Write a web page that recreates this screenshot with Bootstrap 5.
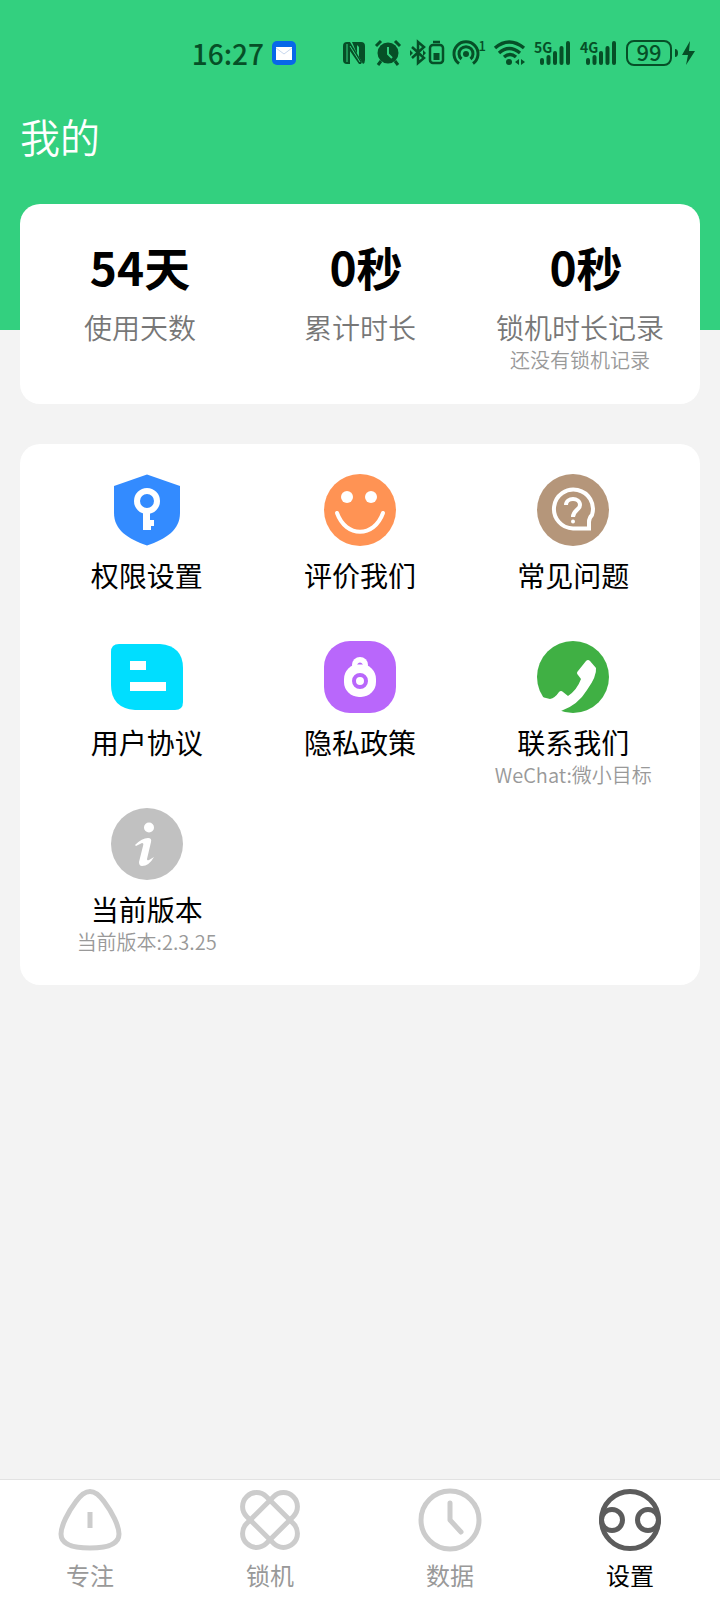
<!DOCTYPE html>
<html lang="zh-CN">
<head>
<meta charset="utf-8">
<meta name="viewport" content="width=device-width, initial-scale=1">
<title>我的</title>
<link href="https://cdn.jsdelivr.net/npm/bootstrap@5.3.0/dist/css/bootstrap.min.css" rel="stylesheet">
<style>
  body { background: #f3f3f3; color: #000; font-family: "Noto Sans CJK SC", sans-serif; }
  svg { display: block; flex: none; overflow: visible; }
  a { color: inherit; text-decoration: none; }
  .top-area { background: #33d07f; height: 330px; }
  .status-bar { height: 106px; padding-right: 24px; color: #064f27; }
  .status-time { font-size: 28px; font-weight: 500; line-height: 36px; }
  .status-mail { margin-right: 38px; }
  .signal-group { position: relative; width: 38px; height: 28px; }
  .hotspot-group { width: 34px; }
  .signal-name { position: absolute; left: 0; top: 0; font-size: 14px; font-weight: 700; line-height: 16px; }
  .hotspot-count { position: absolute; right: 0; top: 0; font-size: 13px; font-weight: 500; line-height: 14px; }
  .page-title { font-size: 40px; font-weight: 350; line-height: 60px; padding-left: 20px; }
  .panel { background: #fff; border-radius: 20px; margin: 0 20px 40px; }
  .stats-panel { margin-top: -126px; min-height: 200px; padding: 32px 10px 24px; }
  .stat-value { font-size: 46px; font-weight: 700; line-height: 60px; }
  .stat-seconds { padding-left: 12px; }
  .stat-label { font-size: 28px; line-height: 32px; font-weight: 350; color: #777; margin-top: 15px; }
  .sub-text { font-size: 20px; line-height: 34px; font-weight: 350; color: #999; }
  .menu-panel { padding: 20px; }
  .menu-item { min-height: 167px; padding-top: 10px; }
  .menu-label { font-size: 28px; line-height: 32px; margin-top: 13px; font-weight: 400; }
  .tab-bar { background: #fff; border-top: 1px solid #e2e2e2; height: 121px; }
  .tab-link { padding-top: 8px; color: #999; font-size: 24px; line-height: 32px; }
  .tab-link svg { color: #ccc; margin-bottom: 7px; }
  .tab-link.active { color: #000; }
  .tab-link.active svg { color: #5c5c5c; }
</style>
</head>
<body>
<div class="d-flex flex-column min-vh-100">
  <header class="top-area">
    <div class="status-bar d-flex align-items-center justify-content-end gap-2">
      <span class="status-time">16:27</span>
      <svg class="status-mail" width="24" height="24" viewBox="0 0 24 24"><rect width="24" height="24" rx="5" fill="#0868e8"/><rect x="4" y="6" width="16" height="13" fill="#fff"/><path d="M4 7l8 6 8-6" fill="none" stroke="#c7d8ee"/></svg>
      <svg width="24" height="28" viewBox="0 0 24 28"><path d="M5 3h3l12 20-1 2h-2L8 12v13H5q-4 0-4-4V7q0-4 4-4z" fill="currentColor"/><path d="M10 3h9q4 0 4 4v14q0 3-2 4l-4-7V8l-2-2v9z" fill="currentColor"/><path d="M5 5v18M8 7l10 16" stroke="#33d07f" stroke-width="1"/></svg>
      <svg width="28" height="28" viewBox="0 0 28 28"><circle cx="14" cy="14" r="10.500" fill="currentColor"/><path d="M2 7l5-5M21 2l5 5M7 22l-3 4M21 22l3 4" stroke="currentColor" stroke-width="3"/><path d="M14 8v7l4 4" fill="none" stroke="#33d07f" stroke-width="2"/></svg>
      <svg width="34" height="28" viewBox="0 0 34 28" fill="none" stroke="currentColor" stroke-width="2.500"><path d="M2 8l12 11-6 5V3l6 5L2 19"/><path d="M0 11l3 3-3 3zM13 11l3 3-3 3z" fill="currentColor" stroke="none"/><rect x="20" y="6" width="13" height="18" rx="3"/><path d="M23 3h7"/><rect x="23.500" y="14" width="6" height="7" fill="currentColor" stroke="none"/></svg>
      <span class="signal-group hotspot-group">
        <svg width="34" height="28" viewBox="0 0 34 28" fill="none" stroke="currentColor" stroke-width="3"><circle cx="14" cy="15" r="3" fill="currentColor" stroke="none"/><path d="M9.500 20a7 7 0 1 1 9 0M7 24.500a12 12 0 1 1 14 0"/></svg>
        <span class="hotspot-count">1</span>
      </span>
      <svg width="32" height="28" viewBox="0 0 32 28" fill="none" stroke="currentColor" stroke-width="3.500"><path d="M1 9q14-12 29 0M5 14q10-9 21 0M10 18q6-5 12 0"/><circle cx="15" cy="23" r="3" fill="currentColor" stroke="none"/><path d="M25 20v6l-4-3zM27 20l4 3-4 3z" fill="currentColor" stroke="none"/></svg>
      <span class="signal-group"><span class="signal-name">5G</span>
        <svg width="38" height="28" viewBox="0 0 38 28"><path d="M8 21v3M14.500 18v6M21 14v10M27.500 9v15M34 4v20" stroke="currentColor" stroke-width="4" stroke-linecap="round"/></svg></span>
      <span class="signal-group"><span class="signal-name">4G</span>
        <svg width="38" height="28" viewBox="0 0 38 28"><path d="M8 21v3M14.500 18v6M21 14v10M27.500 9v15M34 4v20" stroke="currentColor" stroke-width="4" stroke-linecap="round"/></svg></span>
      <svg width="70" height="28" viewBox="0 0 70 28"><rect x="1" y="2" width="44" height="24" rx="7" fill="none" stroke="currentColor" stroke-width="2"/><text x="23" y="22" text-anchor="middle" font-size="22" font-weight="500" fill="currentColor">99</text><path d="M49 10q3 0 3 4t-3 4z" fill="currentColor"/><path d="M64 2L56 16h6l-2 10 9-14h-6z" fill="currentColor"/></svg>
    </div>
    <h1 class="page-title text-white m-0">我的</h1>
  </header>

  <main>
    <section class="panel stats-panel">
      <div class="row g-0 text-center">
        <div class="col-4"><div class="stat-value">54天</div><div class="stat-label">使用天数</div></div>
        <div class="col-4"><div class="stat-value stat-seconds">0秒</div><div class="stat-label">累计时长</div></div>
        <div class="col-4"><div class="stat-value stat-seconds">0秒</div><div class="stat-label">锁机时长记录</div><div class="sub-text">还没有锁机记录</div></div>
      </div>
    </section>

    <section class="panel menu-panel">
      <div class="row g-0 text-center">
        <a href="#permissions" class="menu-item col-4 d-flex flex-column align-items-center">
          <svg width="72" height="72" viewBox="0 0 72 72"><path d="M36 0.500L69 12v27c0 17-14 26-33 32.500C17 65 3 56 3 39V12z" fill="#338bff"/><circle cx="36" cy="27" r="10" fill="none" stroke="#fff" stroke-width="6"/><path d="M32 38h7v8h4v6h-3v4h-8z" fill="#fff"/></svg>
          <span class="menu-label">权限设置</span>
        </a>
        <a href="#review" class="menu-item col-4 d-flex flex-column align-items-center">
          <svg width="72" height="72" viewBox="0 0 72 72"><circle cx="36" cy="36" r="36" fill="#ff9354"/><circle cx="23" cy="23" r="6" fill="#fff"/><circle cx="47" cy="23" r="6" fill="#fff"/><path d="M13 39C22 64 50 64 59 39" fill="none" stroke="#fff" stroke-width="4" stroke-linecap="round"/></svg>
          <span class="menu-label">评价我们</span>
        </a>
        <a href="#faq" class="menu-item col-4 d-flex flex-column align-items-center">
          <svg width="72" height="72" viewBox="0 0 72 72" fill="none" stroke="#fff" stroke-width="4"><circle cx="36" cy="36" r="36" fill="#b5967a" stroke="none"/><path d="M52 54.500H36A19.500 19.500 0 1 1 55 41Q52 44 52 48z"/><path d="M29 31c0-8 14-8 14 0 0 5-7 5-7 12"/><circle cx="36" cy="47.500" r="2" fill="#fff" stroke="none"/></svg>
          <span class="menu-label">常见问题</span>
        </a>
        <a href="#terms" class="menu-item col-4 d-flex flex-column align-items-center">
          <svg width="72" height="72" viewBox="0 0 72 72"><path d="M8 3h41q23 2 23 24v34q0 8-8 8H24Q0 67 0 44V11q0-8 8-8z" fill="#00deff"/><path d="M19 20h16v9H19zM19 41h36v9H19z" fill="#fff"/></svg>
          <span class="menu-label">用户协议</span>
        </a>
        <a href="#privacy" class="menu-item col-4 d-flex flex-column align-items-center">
          <svg width="72" height="72" viewBox="0 0 72 72"><rect width="72" height="72" rx="26" fill="#b967fb"/><circle cx="36" cy="24" r="8" fill="#fff"/><rect x="20" y="23" width="32" height="33" rx="15" fill="#fff"/><path d="M33 23.500q3-4 6 0z" fill="#b967fb"/><circle cx="36" cy="40" r="6" fill="none" stroke="#b967fb" stroke-width="4"/></svg>
          <span class="menu-label">隐私政策</span>
        </a>
        <a href="#contact" class="menu-item col-4 d-flex flex-column align-items-center">
          <svg width="72" height="72" viewBox="0 0 72 72"><circle cx="36" cy="36" r="36" fill="#40b044"/><path d="M24 70Q41 64 50 49 60 35 59 27L53 20q-2-2-4 0l-8 10q-2 2 0 4l3 4Q40 49 31 55L26 51q-2-2-4 0-4 6-9 7L5 56v16h19z" fill="#fff"/></svg>
          <span class="menu-label">联系我们</span><span class="sub-text">WeChat:微小目标</span>
        </a>
        <a href="#version" class="menu-item col-4 d-flex flex-column align-items-center">
          <svg width="72" height="72" viewBox="0 0 72 72"><circle cx="36" cy="36" r="36" fill="#c1c1c1"/><circle cx="38" cy="19.500" r="5" fill="#fff"/><path d="M24 37q7-7 13-7 4 0 3 4l-4 17q0 2 2 1l5-3q-5 9-12 9-3 0-3-4l4-16q1-3-1-3l-6 3z" fill="#fff"/></svg>
          <span class="menu-label">当前版本</span><span class="sub-text">当前版本:2.3.25</span>
        </a>
      </div>
    </section>
  </main>

  <nav class="tab-bar row g-0 mt-auto text-center">
    <a href="#focus" class="tab-link col-3 d-flex flex-column align-items-center">
      <svg width="64" height="64" viewBox="0 0 64 64" fill="none" stroke="currentColor" stroke-width="5"><path d="M32 3.500c-5 0-9 3-14 10C10 24 3 38 3 46c0 11 12 14 29 14s29-3 29-14c0-8-7-22-15-32.500-5-7-9-10-14-10zM32 24v16"/></svg>
      专注
    </a>
    <a href="#lock" class="tab-link col-3 d-flex flex-column align-items-center">
      <svg width="64" height="64" viewBox="0 0 64 64" fill="none" stroke="currentColor" stroke-width="5"><rect x="-1" y="18" width="66" height="28" rx="14" transform="rotate(45 32 32)"/><rect x="-1" y="18" width="66" height="28" rx="14" transform="rotate(-45 32 32)"/></svg>
      锁机
    </a>
    <a href="#data" class="tab-link col-3 d-flex flex-column align-items-center">
      <svg width="64" height="64" viewBox="0 0 64 64" fill="none" stroke="currentColor" stroke-width="5"><circle cx="32" cy="32" r="29"/><path d="M32 15v17l11 12" stroke-linecap="round" stroke-linejoin="round"/></svg>
      数据
    </a>
    <a href="#settings" class="tab-link active col-3 d-flex flex-column align-items-center" aria-current="page">
      <svg width="64" height="64" viewBox="0 0 64 64" fill="none" stroke="currentColor" stroke-width="5"><circle cx="32" cy="32" r="28.500"/><circle cx="14" cy="32" r="10.500"/><circle cx="50" cy="32" r="10.500"/></svg>
      设置
    </a>
  </nav>
</div>
<script src="https://cdn.jsdelivr.net/npm/bootstrap@5.3.0/dist/js/bootstrap.bundle.min.js"></script>
</body>
</html>
